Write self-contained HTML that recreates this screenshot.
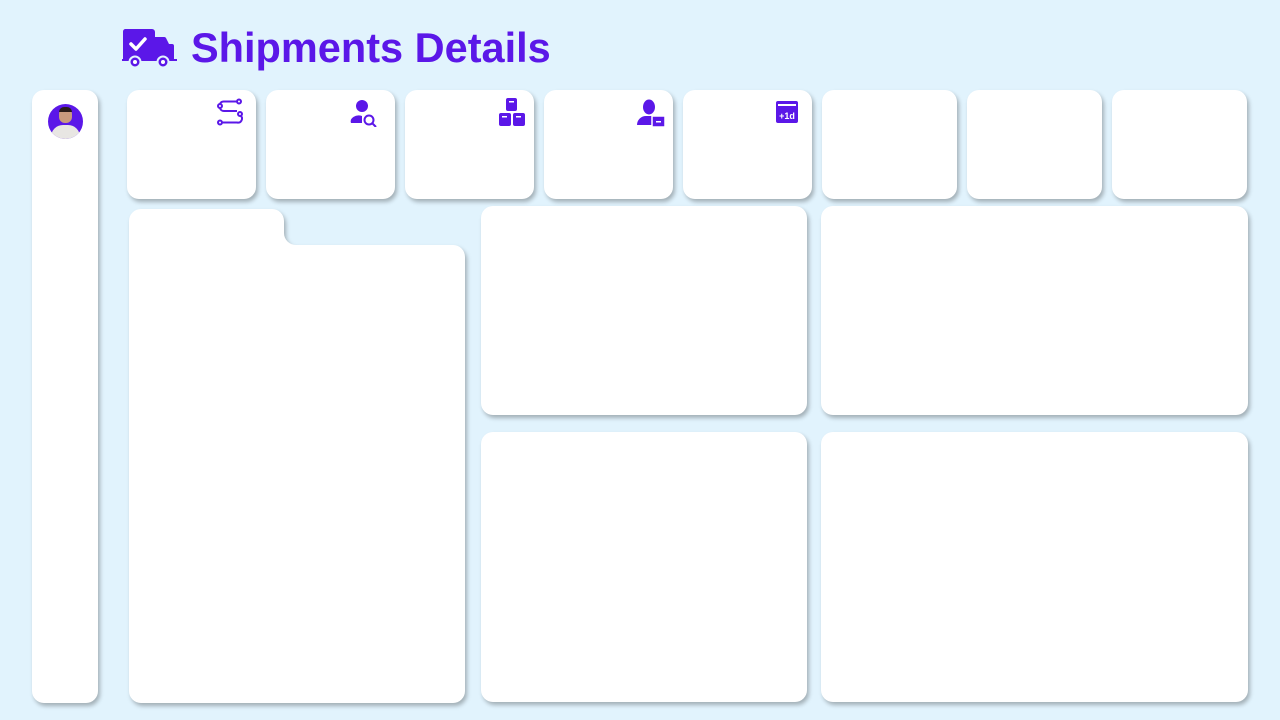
<!DOCTYPE html>
<html><head><meta charset="utf-8"><style>
*{margin:0;padding:0;box-sizing:border-box}
body{width:1280px;height:720px;background:#e1f3fd;position:relative;overflow:hidden;font-family:"Liberation Sans",sans-serif}
.c{position:absolute;background:#fff;border-radius:12px;box-shadow:2px 3px 4px rgba(0,0,0,.28)}
.t{position:absolute;left:191px;top:24px;font-size:41.5px;font-weight:bold;color:#5b17e8;letter-spacing:0}
svg{position:absolute}
</style></head><body>
<svg style="left:120px;top:27px" width="58" height="42" viewBox="0 0 58 42">
<path d="M5 2h27a3 3 0 0 1 3 3v5h9a2 2 0 0 1 2 1l3 6h3a2 2 0 0 1 2 2v13h3v2H2v-2h1V5a3 3 0 0 1 2-3z" fill="#5b17e8"/>
<path d="M11 17l5 5 9-10" stroke="#fff" stroke-width="3.5" fill="none" stroke-linecap="round" stroke-linejoin="round"/>
<circle cx="15" cy="35" r="5.5" fill="#5b17e8" stroke="#e1f3fd" stroke-width="2"/>
<circle cx="43" cy="35" r="5.5" fill="#5b17e8" stroke="#e1f3fd" stroke-width="2"/>
<circle cx="15" cy="35" r="2" fill="#fff"/><circle cx="43" cy="35" r="2" fill="#fff"/>
</svg>
<div class="t">Shipments Details</div>
<div class="c" style="left:32px;top:90px;width:66px;height:613px"></div>
<div style="position:absolute;left:48px;top:104px;width:35px;height:35px;border-radius:50%;background:#5b17e8;overflow:hidden">
<div style="position:absolute;left:11px;top:4px;width:13px;height:15px;border-radius:6px;background:#c99a7e"></div>
<div style="position:absolute;left:11px;top:3px;width:13px;height:5px;border-radius:5px 5px 0 0;background:#2b1d1a"></div>
<div style="position:absolute;left:3px;top:21px;width:29px;height:18px;border-radius:12px 12px 0 0;background:#e8e6e3"></div>
</div>
<div class="c" style="left:127px;top:90px;width:129px;height:109px"></div>
<div class="c" style="left:266px;top:90px;width:129px;height:109px"></div>
<div class="c" style="left:405px;top:90px;width:129px;height:109px"></div>
<div class="c" style="left:544px;top:90px;width:129px;height:109px"></div>
<div class="c" style="left:683px;top:90px;width:129px;height:109px"></div>
<div class="c" style="left:822px;top:90px;width:135px;height:109px"></div>
<div class="c" style="left:967px;top:90px;width:135px;height:109px"></div>
<div class="c" style="left:1112px;top:90px;width:135px;height:109px"></div>
<svg style="left:216px;top:98px" width="30" height="30" viewBox="0 0 30 30" fill="none" stroke="#5b17e8" stroke-width="2">
<circle cx="23" cy="3.5" r="2"/><circle cx="4" cy="8" r="2"/><circle cx="24" cy="16" r="2"/><circle cx="4" cy="24.5" r="2"/>
<path d="M21 3.5H8a4 4 0 0 0-4 2.5M4 10a4 4 0 0 0 4 3h13M8 24.5h13a4 4 0 0 0 4-6.5M6 24.5h2"/>
</svg>
<svg style="left:350px;top:99px" width="28" height="28" viewBox="0 0 28 28">
<circle cx="12" cy="7" r="6" fill="#5b17e8"/><path d="M1 24a8 6 0 0 1 11-7v7z" fill="#5b17e8"/>
<circle cx="19" cy="21" r="4.5" fill="none" stroke="#5b17e8" stroke-width="2"/><path d="M22 24l4 4" stroke="#5b17e8" stroke-width="2"/>
</svg>
<svg style="left:498px;top:97px" width="28" height="30" viewBox="0 0 28 30" fill="#5b17e8">
<rect x="8" y="1" width="11" height="13" rx="2"/><rect x="1" y="16" width="12" height="13" rx="2"/><rect x="15" y="16" width="12" height="13" rx="2"/>
<g fill="#fff"><rect x="11" y="4" width="5" height="1.5"/><rect x="4" y="19" width="5" height="1.5"/><rect x="18" y="19" width="5" height="1.5"/></g>
</svg>
<svg style="left:636px;top:99px" width="30" height="30" viewBox="0 0 30 30" fill="#5b17e8">
<ellipse cx="13" cy="8" rx="6" ry="7.5"/>
<path d="M1 26a9 9 0 0 1 9-9h6a9 9 0 0 1 6 3v6z"/>
<rect x="16" y="17" width="13" height="11" fill="#5b17e8" stroke="#fff" stroke-width="1.5"/><rect x="20" y="22" width="5" height="1.5" fill="#fff"/>
</svg>
<svg style="left:775px;top:100px" width="24" height="24" viewBox="0 0 24 24">
<rect x="1" y="1" width="22" height="22" rx="2" fill="#5b17e8"/><rect x="3" y="4" width="18" height="2" fill="#fff"/>
<text x="12" y="19" font-size="9" font-weight="bold" fill="#fff" text-anchor="middle" font-family="Liberation Sans">+1d</text>
</svg>
<svg style="left:129px;top:209px;overflow:visible;filter:drop-shadow(2px 3px 2px rgba(0,0,0,.28))" width="336" height="494">
<path d="M12 0H143a12 12 0 0 1 12 12v12a12 12 0 0 0 12 12H324a12 12 0 0 1 12 12V482a12 12 0 0 1-12 12H12a12 12 0 0 1-12-12V12A12 12 0 0 1 12 0z" fill="#fff"/>
</svg>
<div class="c" style="left:481px;top:206px;width:326px;height:209px"></div>
<div class="c" style="left:821px;top:206px;width:427px;height:209px"></div>
<div class="c" style="left:481px;top:432px;width:326px;height:270px"></div>
<div class="c" style="left:821px;top:432px;width:427px;height:270px"></div>
</body></html>
